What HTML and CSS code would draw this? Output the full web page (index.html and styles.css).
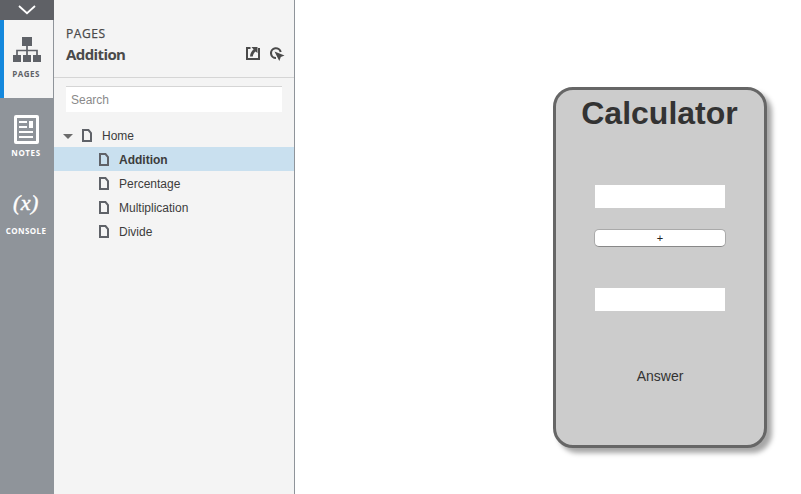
FILE: index.html
```
<!DOCTYPE html>
<html lang="en">
<head>
<meta charset="utf-8">
<title>Addition</title>
<link rel="stylesheet" href="styles.css">
</head>
<body>
<div class="app">
  <nav class="rail">
    <div class="collapse"><svg width="20" height="10" viewBox="0 0 20 10"><path d="M2 1 10 8.2 18 1" fill="none" stroke="#fff" stroke-width="1.8"/></svg></div>
    <div class="tab active">
      <svg width="28" height="26" viewBox="0 0 28 26" fill="#5f6268"><path d="M9 0h10v9h-10zM0 18h8v7H0zM10 18h8v7h-8zM20 18h8v7h-8z"/><path d="M14 9v9M4 18v-4.5h20V18" fill="none" stroke="#5f6268" stroke-width="1.7"/></svg>
      <span>PAGES</span>
    </div>
    <div class="tab">
      <svg width="25" height="29" viewBox="0 0 25 29"><rect x="1.5" y="1.5" width="22" height="26" rx=".5" fill="none" stroke="#fff" stroke-width="3"/><path d="M5 7h8M5 12h8M5 17h14M5 22h14" stroke="#fff" stroke-width="2"/><path d="M15 6h4v7h-4z" fill="#fff"/></svg>
      <span>NOTES</span>
    </div>
    <div class="tab">
      <i class="fx">(x)</i>
      <span class="console">CONSOLE</span>
    </div>
  </nav>
  <aside class="sidebar">
    <header class="head">
      <div class="titles"><div class="kicker">PAGES</div><div class="title">Addition</div></div>
      <div class="tools">
        <svg width="14" height="13" viewBox="0 0 14 13"><path d="M4.5 1H1v11h12V1" fill="none" stroke="#4a4a4a" stroke-width="2"/><path d="M5.500 0H11.500v6L9.500 4.400C8 5.500 7 7.500 6.800 9.500H4C4.200 6.500 5.500 4 7.600 2.500z" fill="#4a4a4a"/></svg>
        <svg width="15" height="15" viewBox="0 0 15 15"><path d="M6 11A4.900 4.900 0 1 1 10.700 5" fill="none" stroke="#4a4a4a" stroke-width="2.100"/><path d="M4.500 4.500 14.500 8.600 10.800 10 9.300 14z" fill="#4a4a4a"/></svg>
      </div>
    </header>
    <input class="search" type="text" placeholder="Search" aria-label="Search">
    <ul class="tree">
      <li class="root"><b class="arrow"></b><svg class="page" viewBox="0 0 10 13"><path d="M1 1h5.500L9 4v8H1z"/></svg><span>Home</span></li>
      <li class="selected"><svg class="page" viewBox="0 0 10 13"><path d="M1 1h5.500L9 4v8H1z"/></svg><span>Addition</span></li>
      <li><svg class="page" viewBox="0 0 10 13"><path d="M1 1h5.500L9 4v8H1z"/></svg><span>Percentage</span></li>
      <li><svg class="page" viewBox="0 0 10 13"><path d="M1 1h5.500L9 4v8H1z"/></svg><span>Multiplication</span></li>
      <li><svg class="page" viewBox="0 0 10 13"><path d="M1 1h5.500L9 4v8H1z"/></svg><span>Divide</span></li>
    </ul>
  </aside>
  <main class="canvas">
    <section class="calculator">
      <h1>Calculator</h1>
      <input class="field" type="text" aria-label="First number">
      <button class="plus" type="button">+</button>
      <input class="field" type="text" aria-label="Second number">
      <p class="answer">Answer</p>
    </section>
  </main>
</div>
</body>
</html>
```
FILE: styles.css
```
* { box-sizing: border-box; }
body { margin: 0; background: #fff; font-family: "Liberation Sans", Arial, sans-serif; color: #3c3c3c; }
svg { display: block; }
.app { display: flex; height: 494px; overflow: hidden; }

.rail { width: 54px; flex: none; background: #8f949a; }
.collapse { height: 20px; background: #5f6166; display: flex; justify-content: center; padding: 5px 0 0; }
.tab { height: 78px; display: flex; flex-direction: column; align-items: center; padding: 17px 2px 0 0; color: #fff; }
.tab span { font: 700 8px/10px "Open Sans", sans-serif; letter-spacing: .6px; margin-top: 4px; white-space: nowrap; }
.tab.active { background: #f4f4f4; color: #5f6268; border-left: 4px solid #1488dd; border-right: 1px solid #8f949a; padding: 17px 0 0 0; }
.tab.active svg { margin-right: 3px; }
.tab.active span { margin: 6px 5px 0 0; letter-spacing: .5px; }
.fx { font: italic 400 22px/25px "Liberation Serif", serif; letter-spacing: .5px; -webkit-text-stroke: .4px #fff; margin-top: -3px; }
.tab .console { letter-spacing: .4px; margin-top: 11px; }

.sidebar { width: 241px; flex: none; background: #f4f4f4; border-right: 1px solid #8f949a; }
.head { height: 78px; border-bottom: 1px solid #d5d5d5; display: flex; justify-content: space-between; padding: 26px 9px 0 12px; color: #4a4a4a; }
.kicker { font: 400 12px/16px "Open Sans", sans-serif; letter-spacing: .6px; -webkit-text-stroke: .25px #4a4a4a; }
.title { font: 700 15px/18px "Open Sans", sans-serif; letter-spacing: -.6px; margin-top: 3px; }
.tools { display: flex; gap: 10px; padding-top: 21px; }
.search { display: block; width: 216px; height: 26px; margin: 8px 0 11px 12px; border: 0; border-top: 1px solid #d5d5d5; padding: 0 5px; background: #fff; font: 12px "Liberation Sans", Arial, sans-serif; outline: 0; }
.search::placeholder { color: #8a8a8a; opacity: 1; }
.tree { list-style: none; margin: 0; padding: 0; font-size: 12px; }
.tree li { height: 24px; display: flex; align-items: center; padding-left: 45px; }
.tree span { padding-top: 2px; }
.tree .root { padding-left: 9px; }
.tree .selected { background: #c9e0ef; font-weight: 700; }
.arrow { border: 5px solid transparent; border-top-color: #6b6b6b; border-bottom: 0; margin: 2px 9px 0 0; }
.page { width: 10px; height: 13px; margin-right: 10px; fill: none; stroke: #5f6268; stroke-width: 2; }

.canvas { flex: 1; padding: 87px 0 0 258px; }
.calculator { width: 214px; height: 361px; background: #ccc; border: 3px solid #666; border-radius: 20px; box-shadow: 5px 5px 5px rgba(0, 0, 0, .35); display: flex; flex-direction: column; align-items: center; }
h1 { margin: 5px 1px 0 0; font-size: 32px; line-height: 37px; color: #333; }
.field { width: 130px; height: 23px; border: 0; margin: 53px 0 0; padding: 0 4px; background: #fff; }
.plus { width: 132px; height: 18px; margin: 21px 0 0; border: 1px solid #aaa; border-bottom-color: #888; border-radius: 5px; background: #fff; color: #222; font: 11px/16px "Liberation Sans", Arial, sans-serif; padding: 0; }
.plus + .field { margin-top: 41px; }
.answer { margin: 57px 0 0; font-size: 14px; line-height: 16px; color: #333; }
```
